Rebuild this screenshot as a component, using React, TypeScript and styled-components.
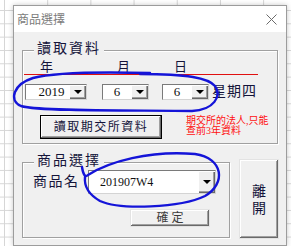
import React from "react";
import styled, { createGlobalStyle } from "styled-components";

const GlobalStyle = createGlobalStyle`
  html, body {
    margin: 0;
    padding: 0;
  }
  body {
    background-color: #fff;
    background-image:
      linear-gradient(to right, #d6d6d6 1px, transparent 1px),
      linear-gradient(to bottom, #d6d6d6 1px, transparent 1px);
    background-size: 43.2px 13.33px;
    background-position: 4px 10px;
    font-family: "Liberation Serif", "Noto Sans CJK TC", serif;
  }
  * {
    box-sizing: border-box;
  }
`;

const INK = "#14143a";

const Desktop = styled.div`
  position: relative;
  width: 291px;
  height: 246px;
  padding: 5px 0 0 13px;
  overflow: hidden;
`;

const Dialog = styled.div`
  width: 274px;
  height: 241px;
  border: 1px solid #9c9c9c;
  background: #f0f0f0;
  display: flex;
  flex-direction: column;
  box-shadow: 0 0 5px rgba(0, 0, 0, 0.22);
`;

const TitleBar = styled.div`
  height: 26px;
  background: #fff;
  display: flex;
  align-items: center;
  justify-content: space-between;
  padding: 0 9px 0 3px;
`;

const Title = styled.div`
  font-family: "Noto Sans CJK TC", sans-serif;
  font-size: 12px;
  line-height: 14px;
  color: #7c7c7c;
`;

const Body = styled.div`
  flex: 1;
  display: flex;
  flex-direction: column;
  padding: 18px 0 0 8px;
`;

const Group = styled.div<{ $w: number; $h: number }>`
  position: relative;
  width: ${(p) => p.$w}px;
  height: ${(p) => p.$h}px;
  border: 1px solid #a0a0a0;
  box-shadow: 1px 1px 0 #fff, inset 1px 1px 0 #fff;
  display: flex;
  flex-direction: column;
`;

const Legend = styled.div`
  position: absolute;
  top: -11px;
  left: 11px;
  padding: 0 3px;
  background: #f0f0f0;
  font-size: 14px;
  line-height: 18px;
  letter-spacing: 2px;
  color: ${INK};
  white-space: nowrap;
`;

const HeaderRow = styled.div`
  margin: 9px 0 0 1px;
  width: 234px;
  height: 15px;
  padding-left: 16px;
  border-bottom: 1px solid #e01010;
  display: grid;
  grid-template-columns: 77px 57px auto;
  font-size: 13px;
  line-height: 14px;
  color: ${INK};
`;

const ComboRow = styled.div`
  margin: 9px 0 0 2px;
  height: 16px;
  display: flex;
  align-items: center;
`;

const Combo = styled.div<{ $w: number; $h: number; $gap?: number }>`
  width: ${(p) => p.$w}px;
  height: ${(p) => p.$h}px;
  margin-left: ${(p) => p.$gap ?? 0}px;
  display: flex;
  background: #fff;
  border: 1px solid;
  border-color: #7a7a7a #d4d4d4 #d4d4d4 #7a7a7a;
`;

const ComboText = styled.div<{ $align: "left" | "center"; $pad: number; $size: number }>`
  flex: 1;
  padding-left: ${(p) => p.$pad}px;
  text-align: ${(p) => p.$align};
  font-size: ${(p) => p.$size}px;
  line-height: 14px;
  color: #111;
  display: flex;
  align-items: center;
  justify-content: ${(p) => (p.$align === "center" ? "center" : "flex-start")};
`;

const DropButton = styled.div`
  width: 17px;
  background: #f0f0f0;
  box-shadow: inset 1px 1px 0 #fff, inset -1px -1px 0 #696969, inset -2px -2px 0 #a0a0a0;
  display: flex;
  align-items: center;
  justify-content: center;

  &::after {
    content: "";
    border-left: 4px solid transparent;
    border-right: 4px solid transparent;
    border-top: 4px solid #000;
  }
`;

const Weekday = styled.div`
  margin-left: 3px;
  font-size: 14px;
  line-height: 16px;
  letter-spacing: 1px;
  color: ${INK};
  white-space: nowrap;
`;

const ButtonRow = styled.div`
  margin-top: 15px;
  padding-left: 17px;
  display: flex;
  align-items: flex-start;
`;

const WinButton = styled.div<{ $w: number; $h: number; $default?: boolean }>`
  width: ${(p) => p.$w}px;
  height: ${(p) => p.$h}px;
  background: #f0f0f0;
  border: 1px solid ${(p) => (p.$default ? "#000" : "#e3e3e3")};
  box-shadow: inset -1px -1px 0 #696969, inset 1px 1px 0 #fff, inset -2px -2px 0 #a0a0a0;
  display: flex;
  align-items: center;
  justify-content: center;
  font-size: 12px;
  line-height: 14px;
  color: ${INK};
  white-space: nowrap;
`;

const ReadButton = styled(WinButton)`
  letter-spacing: 1.5px;
`;

const Note = styled.div`
  margin: 1px 0 0 24px;
  font-size: 10px;
  line-height: 10px;
  color: #ff1010;
  white-space: nowrap;
`;

const BottomRow = styled.div`
  margin-top: 15px;
  display: flex;
  align-items: flex-start;
`;

const ProductGroup = styled(Group)`
  margin-top: 3px;
`;

const ProductRow = styled.div`
  margin-top: 7px;
  padding-left: 10px;
  display: flex;
  align-items: center;
`;

const FieldLabel = styled.div`
  width: 55px;
  font-size: 14px;
  line-height: 16px;
  letter-spacing: 1.5px;
  color: ${INK};
  white-space: nowrap;
`;

const ConfirmButton = styled(WinButton)`
  margin: 15px 0 0 107px;
  letter-spacing: 3px;
  padding-left: 3px;
  color: #3c3c3c;
`;

const ExitButton = styled(WinButton)`
  margin-left: 9px;
  flex-direction: column;
  font-size: 14px;
  line-height: 17px;
  padding-top: 2px;
`;

const Scribble = styled.svg`
  position: absolute;
  left: 0;
  top: 0;
  pointer-events: none;
`;

const CloseIcon = () => (
  <svg width="11" height="11" viewBox="0 0 11 11">
    <path d="M0.5 0.5 L10.5 10.5 M10.5 0.5 L0.5 10.5" stroke="#6b6b6b" strokeWidth="1" fill="none" />
  </svg>
);

export default function App() {
  return (
    <>
      <GlobalStyle />
      <Desktop>
        <Dialog>
          <TitleBar>
            <Title>商品選擇</Title>
            <CloseIcon />
          </TitleBar>
          <Body>
            <Group $w={256} $h={94}>
              <Legend>讀取資料</Legend>
              <HeaderRow>
                <span>年</span>
                <span>月</span>
                <span>日</span>
              </HeaderRow>
              <ComboRow>
                <Combo $w={62} $h={16}>
                  <ComboText $align="center" $pad={8} $size={13}>2019</ComboText>
                  <DropButton />
                </Combo>
                <Combo $w={47} $h={16} $gap={15}>
                  <ComboText $align="center" $pad={0} $size={13}>6</ComboText>
                  <DropButton />
                </Combo>
                <Combo $w={47} $h={16} $gap={13}>
                  <ComboText $align="center" $pad={0} $size={13}>6</ComboText>
                  <DropButton />
                </Combo>
                <Weekday>星期四</Weekday>
              </ComboRow>
              <ButtonRow>
                <ReadButton $w={122} $h={24} $default>讀取期交所資料</ReadButton>
                <Note>
                  期交所的法人,只能
                  <br />
                  查前3年資料
                </Note>
              </ButtonRow>
            </Group>
            <BottomRow>
              <ProductGroup $w={208} $h={76}>
                <Legend>商品選擇</Legend>
                <ProductRow>
                  <FieldLabel>商品名</FieldLabel>
                  <Combo $w={128} $h={24}>
                    <ComboText $align="left" $pad={11} $size={12}>201907W4</ComboText>
                    <DropButton />
                  </Combo>
                </ProductRow>
                <ConfirmButton $w={80} $h={18}>確定</ConfirmButton>
              </ProductGroup>
              <ExitButton $w={40} $h={80}>
                <span>離</span>
                <span>開</span>
              </ExitButton>
            </BottomRow>
          </Body>
        </Dialog>
        <Scribble width="291" height="246" viewBox="0 0 291 246">
          <path
            d="M150 73 C 110 72, 55 72, 33 78 C 14 84, 8 100, 21 106 C 40 112, 150 110, 192 111 C 214 110, 222 96, 215 86 C 208 78, 188 74, 140 74"
            stroke="#1414d8"
            strokeWidth="2.4"
            fill="none"
            strokeLinecap="round"
          />
          <path
            d="M82 167 C 83 174, 85 178, 88 175 C 108 162, 150 150, 195 154 C 224 158, 226 184, 205 196 C 180 208, 120 210, 100 201 C 88 194, 84 186, 85 177"
            stroke="#1414d8"
            strokeWidth="2.4"
            fill="none"
            strokeLinecap="round"
          />
        </Scribble>
      </Desktop>
    </>
  );
}
